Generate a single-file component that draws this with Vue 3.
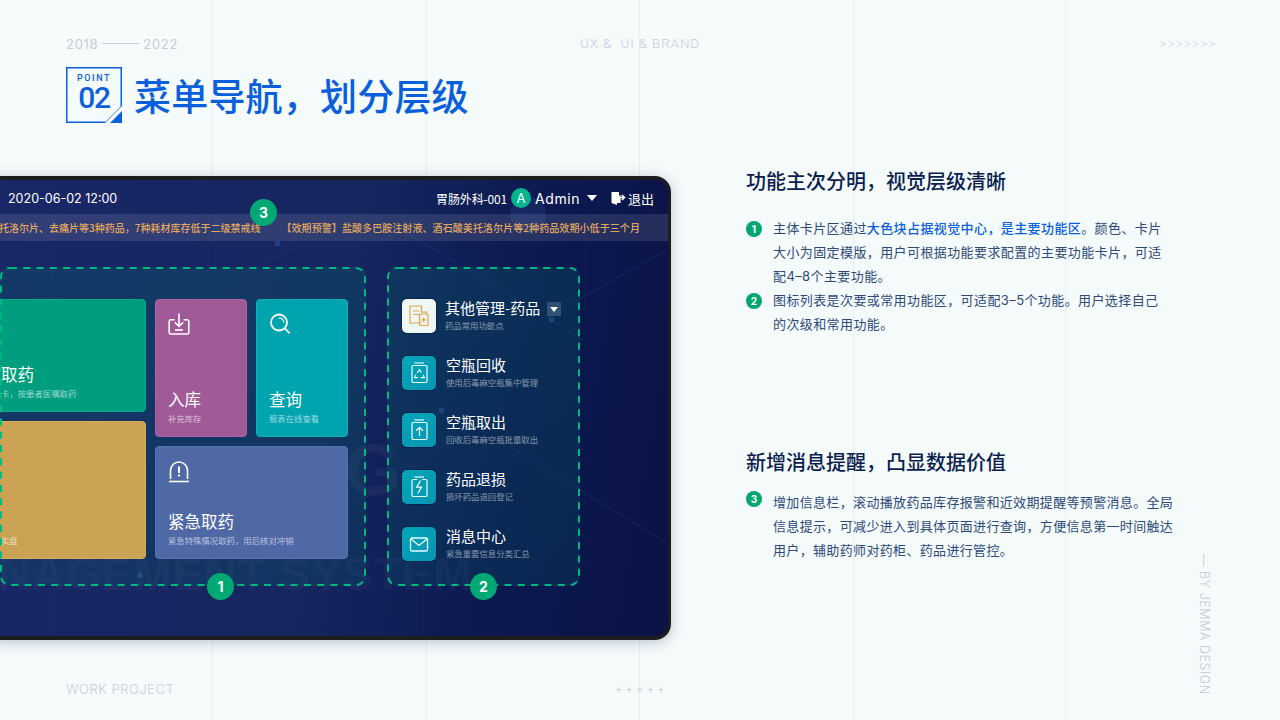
<script setup>
const sideItems = [
  { title: '空瓶回收', sub: '使用后毒麻空瓶集中管理', icon: 'recycle' },
  { title: '空瓶取出', sub: '回收后毒麻空瓶批量取出', icon: 'up' },
  { title: '药品退损', sub: '损坏药品退回登记', icon: 'bolt' },
  { title: '消息中心', sub: '紧急重要信息分类汇总', icon: 'mail' }
]
</script>

<template>
  <div class="slide">
    <div class="top-row">
      <div class="date-range"><span>2018</span><i class="dash"></i><span>2022</span></div>
      <div class="scope">UX &amp;&nbsp; UI &amp; BRAND</div>
      <div class="arrows">&gt;&gt;&gt;&gt;&gt;&gt;&gt;</div>
    </div>

    <div class="title-row">
      <div class="point">
        <svg class="point-frame" width="56" height="56" viewBox="0 0 56 56">
          <path d="M.75.75H55.25V40L40 55.25H.75Z" fill="none" stroke="#0a5fdc" stroke-width="1.5" />
          <path d="M39 56 56 39V42L42 56Z" fill="#fff" />
          <path d="M44 56 56 44V56Z" fill="#0a5fdc" />
        </svg>
        <span class="point-label">POINT</span>
        <span class="point-num">02</span>
      </div>
      <h1 class="title">菜单导航，划分层级</h1>
    </div>

    <div class="main-row">
      <div class="tablet">
        <svg class="deco" width="685" height="456" viewBox="0 0 685 456">
          <g stroke="#6f9fe0" stroke-opacity=".13" fill="none">
            <path d="M424 53 600 160" />
            <path d="M527 267 684 363" />
            <path d="M564 137 684 70" />
            <path d="M207 120 317 65" />
            <path d="M70 30V456M232 30V120M440 300V456M602 30V120" stroke-opacity=".06" />
          </g>
          <circle cx="545" cy="35" r="18" fill="#4a78b8" fill-opacity=".16" />
          <rect x="292" y="61" width="5" height="5" fill="#3258b0" fill-opacity=".55" />
          <rect x="456" y="228" width="5" height="5" fill="#3258b0" fill-opacity=".5" />
          <rect x="155" y="393" width="5" height="5" fill="#3258b0" fill-opacity=".5" />
          <rect x="566" y="137" width="5" height="5" fill="#3258b0" fill-opacity=".5" />
        </svg>
        <div class="watermark-g">G</div>
        <div class="watermark">NAGEMENT SYSTEM</div>

        <div class="topbar">
          <span class="clock">2020-06-02 12:00</span>
          <div class="user">
            <span class="dept">胃肠外科-001</span>
            <span class="avatar">A</span>
            <span class="admin">Admin</span>
            <i class="caret"></i>
            <svg class="logout-icon" width="15" height="14" viewBox="0 0 15 14">
              <path d="M.5 1H8V4.6H9.6V12H6V14L.5 12Z" fill="#fff" />
              <path d="M8.5 6.5H12.5M10.8 4 13.5 6.5 10.8 9" fill="none" stroke="#fff" stroke-width="1.6" />
            </svg>
            <span class="exit">退出</span>
          </div>
        </div>

        <div class="ticker">
          <span>托洛尔片、去痛片等3种药品，7种耗材库存低于二级禁戒线</span>
          <span class="ticker-second">【效期预警】盐酸多巴胺注射液、酒石酸美托洛尔片等2种药品效期小低于三个月</span>
          <b class="badge badge-ticker">3</b>
        </div>

        <div class="panels">
          <section class="panel panel-main">
            <svg class="dashes" width="366" height="319" viewBox="0 0 366 319">
              <rect x="1" y="1" width="364" height="317" rx="9" fill="none" stroke="#00b880" stroke-width="2" stroke-dasharray="7 6.3" />
            </svg>
            <div class="card-col card-col-wide">
              <div class="card card-green">
                <div class="card-title">取药</div>
                <div class="card-sub">卡，按患者医嘱取药</div>
              </div>
              <div class="card card-yellow">
                <div class="card-sub">实盘</div>
              </div>
            </div>
            <div class="card-col">
              <div class="card-pair">
                <div class="card card-purple">
                  <svg class="card-icon" width="22" height="22" viewBox="0 0 22 22" fill="none" stroke="#fff" stroke-width="1.6">
                    <path d="M6.5 6.8H2.8A1.6 1.6 0 0 0 1.2 8.4V19.4A1.6 1.6 0 0 0 2.8 21H19.2A1.6 1.6 0 0 0 20.8 19.4V8.4A1.6 1.6 0 0 0 19.2 6.8H15.5" />
                    <path d="M11 .5V13M6.8 9.2 11 13.4 15.2 9.2" />
                    <path d="M7 17H15" />
                  </svg>
                  <div class="card-title">入库</div>
                  <div class="card-sub">补充库存</div>
                </div>
                <div class="card card-teal">
                  <svg class="card-icon" width="22" height="22" viewBox="0 0 22 22" fill="none" stroke="#fff" stroke-width="1.8">
                    <circle cx="10" cy="9.5" r="8" />
                    <path d="M10 4.8A4.8 4.8 0 0 1 14.8 9.5" stroke-width="1.2" />
                    <path d="M15.8 15.3 20.6 20.4" />
                  </svg>
                  <div class="card-title">查询</div>
                  <div class="card-sub">报表在线查看</div>
                </div>
              </div>
              <div class="card card-blue">
                <svg class="card-icon" width="22" height="23" viewBox="0 0 22 23" fill="none" stroke="#fff" stroke-width="1.6">
                  <path d="M2.5 19V10.5A8.5 8.5 0 0 1 19.5 10.5V19" />
                  <path d="M1 21.5H21" />
                  <path d="M11 6.5V13" stroke-width="2" />
                  <path d="M11 14.5V16.5" stroke-width="2" />
                </svg>
                <div class="card-title">紧急取药</div>
                <div class="card-sub">紧急特殊情况取药，用后核对冲销</div>
              </div>
            </div>
            <b class="badge badge-one">1</b>
          </section>

          <section class="panel panel-side">
            <svg class="dashes" width="193" height="319" viewBox="0 0 193 319">
              <rect x="1" y="1" width="191" height="317" rx="9" fill="none" stroke="#00b880" stroke-width="2" stroke-dasharray="7 6.3" />
            </svg>
            <div class="side-item">
              <div class="tile tile-light">
                <svg width="34" height="34" viewBox="0 0 34 34" fill="none" stroke="#dfa44e" stroke-width="1.2">
                  <path d="M19.5 24H8V7H19.5V13" />
                  <path d="M11 12H17M11 15.5H17" />
                  <rect x="17.5" y="15" width="8.5" height="11.5" rx=".8" />
                  <path d="M18.8 13H24.7V15M21.7 18.5V23M19.5 20.8H24" />
                </svg>
              </div>
              <div class="side-text side-text-first">
                <div class="side-title">其他管理-药品</div>
                <div class="side-sub">药品常用功能点</div>
              </div>
              <span class="side-drop"><i></i></span>
            </div>
            <div v-for="item in sideItems" :key="item.title" class="side-item">
              <div class="tile">
                <svg width="34" height="34" viewBox="0 0 34 34" fill="none" stroke="#eafcff" stroke-width="1.2">
                  <template v-if="item.icon === 'recycle'">
                    <path d="M12.5 7H22" stroke-opacity=".6" stroke-width="1.8" />
                    <rect x="10" y="9.5" width="15" height="17" rx="1.2" />
                    <path d="M15.2 17 17.5 13.6 19.4 16.6M13.9 18.6 12.6 21.6H16M18.7 21.6H22.4L21 18.8" stroke-width="1.1" />
                  </template>
                  <template v-else-if="item.icon === 'up'">
                    <path d="M12.5 7H22" stroke-width="1.2" />
                    <rect x="10" y="9.5" width="15" height="17" rx="1.2" />
                    <path d="M17.5 23V14.5M14 17.8 17.5 14.3 21 17.8" stroke-width="1.3" />
                  </template>
                  <template v-else-if="item.icon === 'bolt'">
                    <path d="M12.5 7H22" />
                    <path d="M15 9.5H11.5A1.4 1.4 0 0 0 10 11V25A1.4 1.4 0 0 0 11.5 26.5H23.5A1.4 1.4 0 0 0 25 25V11A1.4 1.4 0 0 0 23.5 9.5H20" />
                    <path d="M18.5 10.5 14.8 17.2H19.5L15.8 23.5" stroke-width="1.3" />
                  </template>
                  <template v-else>
                    <rect x="8.5" y="11" width="17" height="13" rx="1.6" stroke-width="1.3" />
                    <path d="M9 12 17 18.5 25 12" stroke-width="1.3" />
                  </template>
                </svg>
              </div>
              <div class="side-text">
                <div class="side-title">{{ item.title }}</div>
                <div class="side-sub">{{ item.sub }}</div>
              </div>
            </div>
            <b class="badge badge-two">2</b>
          </section>
        </div>
      </div>

      <div class="notes">
        <h2 class="note-head">功能主次分明，视觉层级清晰</h2>
        <div class="note-list">
          <div class="note-item">
            <b class="dot">1</b>
            <p>主体卡片区通过<em>大色块占据视觉中心，是主要功能区</em>。颜色、卡片<br />大小为固定模版，用户可根据功能要求配置的主要功能卡片，可适<br />配4–8个主要功能。</p>
          </div>
          <div class="note-item">
            <b class="dot">2</b>
            <p>图标列表是次要或常用功能区，可适配3–5个功能。用户选择自己<br />的次级和常用功能。</p>
          </div>
        </div>
        <h2 class="note-head note-head-second">新增消息提醒，凸显数据价值</h2>
        <div class="note-list note-list-second">
          <div class="note-item">
            <b class="dot dot-raised">3</b>
            <p>增加信息栏，滚动播放药品库存报警和近效期提醒等预警消息。全局<br />信息提示，可减少进入到具体页面进行查询，方便信息第一时间触达<br />用户，辅助药师对药柜、药品进行管控。</p>
          </div>
        </div>
      </div>
    </div>

    <div class="foot-row">
      <span class="foot-left">WORK PROJECT</span>
      <span class="foot-plus">+ + + + +</span>
    </div>

    <div class="byline">— BY JEMMA DESIGN</div>
  </div>
</template>

<style scoped>
.slide {
  position: relative;
  width: 1280px;
  height: 720px;
  overflow: hidden;
  box-sizing: border-box;
  padding-top: 36px;
  background-color: #f5fafb;
  background-image:
    linear-gradient(#e9eff2, #e9eff2), linear-gradient(#e9eff2, #e9eff2),
    linear-gradient(#e9eff2, #e9eff2), linear-gradient(#e9eff2, #e9eff2),
    linear-gradient(#e9eff2, #e9eff2);
  background-size: 1px 100%;
  background-repeat: no-repeat;
  background-position: 212px 0, 426px 0, 639px 0, 853px 0, 1065px 0;
  font-family: Inter, "Noto Sans CJK SC", sans-serif;
}

.top-row {
  display: grid;
  grid-template-columns: 514px 579px auto;
  height: 14px;
  padding-left: 66px;
  color: #c9cdd9;
  font-size: 13px;
  line-height: 14px;
}
.date-range {
  display: flex;
  align-items: center;
  gap: 4px;
  letter-spacing: .7px;
}
.dash {
  width: 37px;
  height: 1px;
  background: #c9cdd9;
}
.scope {
  font-family: Roboto, sans-serif;
  font-size: 13.5px;
  font-weight: 300;
  letter-spacing: .85px;
}
.arrows {
  font-size: 12px;
  font-weight: 300;
  color: #d3d8e0;
  letter-spacing: .3px;
  padding-top: 1px;
}

.title-row {
  display: flex;
  align-items: center;
  gap: 12px;
  margin: 17px 0 0 66px;
}
.point {
  position: relative;
  display: flex;
  flex-direction: column;
  align-items: center;
  width: 56px;
  height: 56px;
  color: #0a5fdc;
  font-family: Roboto, sans-serif;
}
.point-frame {
  position: absolute;
  inset: 0;
}
.point-label {
  margin-top: 6px;
  font-size: 9px;
  font-weight: 500;
  line-height: 11px;
  letter-spacing: 1.6px;
}
.point-num {
  margin-top: 1px;
  font-size: 30px;
  font-weight: 500;
  line-height: 26px;
  letter-spacing: -1.2px;
}
.title {
  margin: 0;
  font-size: 37px;
  font-weight: 500;
  line-height: 56px;
  letter-spacing: .2px;
  color: #0a5fdc;
  font-family: "Noto Sans CJK SC", sans-serif;
}

.main-row {
  display: flex;
  align-items: flex-start;
  margin-top: 53px;
}
.tablet {
  position: relative;
  flex: none;
  box-sizing: border-box;
  width: 691px;
  height: 464px;
  margin-left: -20px;
  overflow: hidden;
  border: solid #1d1d20;
  border-width: 4px 3px;
  border-radius: 16px;
  box-shadow: 0 2px 14px rgba(30, 50, 90, .28);
  background: linear-gradient(100deg, #1a2768 0%, #16265f 50%, #0c1850 76%, #0a1345 100%);
  color: #fff;
  font-family: "Noto Sans CJK SC", sans-serif;
}
.deco {
  position: absolute;
  left: 0;
  top: 0;
}
.watermark {
  position: absolute;
  left: 15px;
  bottom: 37px;
  font: 700 46px/50px "Liberation Sans", sans-serif;
  letter-spacing: .6px;
  white-space: nowrap;
  color: rgba(255, 255, 255, .045);
}
.watermark-g {
  position: absolute;
  left: 362px;
  top: 250px;
  font: 700 72px/80px "Liberation Sans", sans-serif;
  color: rgba(255, 255, 255, .04);
}

.topbar {
  position: relative;
  display: flex;
  align-items: center;
  justify-content: space-between;
  height: 34px;
  padding: 2px 14px 0 25px;
  box-sizing: border-box;
}
.clock {
  font-family: Inter, sans-serif;
  font-size: 12.5px;
}
.user {
  display: flex;
  align-items: center;
}
.dept {
  font-size: 12px;
  letter-spacing: -.15px;
}
.avatar {
  display: grid;
  place-items: center;
  width: 20px;
  height: 20px;
  margin-left: 4px;
  border-radius: 50%;
  background: #00b48e;
  font: 400 13px Inter, sans-serif;
}
.admin {
  margin-left: 4px;
  font: 400 14px Inter, sans-serif;
  letter-spacing: .55px;
}
.caret {
  width: 0;
  height: 0;
  margin-left: 7px;
  border: solid transparent;
  border-width: 6px 5.5px 0;
  border-top-color: #fff;
}
.logout-icon {
  margin-left: 14px;
}
.exit {
  margin-left: 2px;
  font-size: 13px;
}

.ticker {
  position: relative;
  display: flex;
  align-items: center;
  height: 27px;
  padding-left: 16px;
  background: rgba(255, 255, 255, .11);
  color: #e3a860;
  font-size: 10px;
  font-weight: 500;
  white-space: nowrap;
}
.ticker-second {
  margin-left: 21px;
  letter-spacing: .08px;
}
.badge {
  position: absolute;
  display: grid;
  place-items: center;
  width: 27px;
  height: 27px;
  border-radius: 50%;
  background: #00a873;
  color: #fff;
  font: 700 14px/1 Inter, sans-serif;
  z-index: 3;
}
.badge-ticker {
  left: 267px;
  top: -15px;
}

.panels {
  position: relative;
  display: flex;
  gap: 21px;
  margin: 26px 0 0 17px;
}
.panel {
  position: relative;
  box-sizing: border-box;
  height: 319px;
  border-radius: 9px;
  background: linear-gradient(180deg, rgba(0, 115, 105, .24), rgba(0, 115, 105, .18));
}
.dashes {
  position: absolute;
  left: 0;
  top: 0;
  z-index: 2;
}
.panel-main {
  display: flex;
  gap: 9px;
  width: 366px;
  padding-top: 32px;
}
.panel-side {
  display: flex;
  flex-direction: column;
  gap: 23px;
  width: 193px;
  padding: 32px 0 0 15px;
}
.badge-one {
  left: 207px;
  bottom: -14px;
}
.badge-two {
  left: 83px;
  bottom: -14px;
}

.card-col {
  display: flex;
  flex-direction: column;
  gap: 9px;
  width: 193px;
  height: 260px;
}
.card-col-wide {
  width: 156px;
  margin-left: -10px;
}
.card-pair {
  display: flex;
  gap: 9px;
  height: 138px;
}
.card {
  position: relative;
  flex: 1;
  display: flex;
  flex-direction: column;
  justify-content: flex-end;
  box-sizing: border-box;
  min-width: 0;
  padding: 0 0 11px 12px;
  border: 1px solid;
  border-radius: 4px;
}
.card-icon {
  position: absolute;
  left: 12px;
  top: 13px;
}
.card-title {
  font-size: 16.5px;
  line-height: 22px;
}
.card-sub {
  font-size: 8.4px;
  line-height: 13px;
  margin-top: 2px;
  white-space: nowrap;
  color: rgba(255, 255, 255, .62);
}
.card-green {
  flex: none;
  height: 113px;
  padding-left: 10px;
  background: #009d7e;
  border-color: #0aa98b;
}
.card-yellow {
  flex: none;
  height: 138px;
  padding-left: 10px;
  background: #cba354;
  border-color: #d8ac58;
}
.card-purple {
  background: #a05a97;
  border-color: #ad64a3;
}
.card-teal {
  background: #00a4ae;
  border-color: #0eb0ba;
}
.card-blue {
  flex: none;
  height: 113px;
  background: #4f68a6;
  border-color: #5a73b0;
}

.side-item {
  display: flex;
  align-items: flex-start;
  height: 34px;
}
.tile {
  flex: none;
  width: 34px;
  height: 34px;
  border-radius: 5px;
  background: linear-gradient(135deg, #00a6b8, #0a95b0);
  box-shadow: 0 0 0 1px rgba(6, 20, 70, .5);
}
.tile svg {
  display: block;
}
.tile-light {
  background: #eef7f3;
}
.side-text {
  margin: -1px 0 0 10px;
}
.side-text-first {
  margin-left: 9px;
}
.side-title {
  font-size: 15px;
  line-height: 20px;
  white-space: nowrap;
}
.side-sub {
  margin-top: 1px;
  font-size: 8.4px;
  line-height: 12px;
  white-space: nowrap;
  color: rgba(255, 255, 255, .5);
}
.side-drop {
  display: grid;
  place-items: center;
  width: 14px;
  height: 14px;
  margin: 3px 0 0 7px;
  border-radius: 1px;
  background: rgba(255, 255, 255, .17);
}
.side-drop i {
  width: 0;
  height: 0;
  border: solid transparent;
  border-width: 5px 4px 0;
  border-top-color: #fff;
}

.notes {
  flex: none;
  margin: -9px 0 0 75px;
  font-family: Inter, "Noto Sans CJK SC", sans-serif;
}
.note-head {
  margin: 0;
  font-size: 20px;
  font-weight: 500;
  line-height: 28px;
  color: #0b1f4f;
  font-family: "Noto Sans CJK SC", sans-serif;
}
.note-head-second {
  margin-top: 112px;
}
.note-list {
  margin-top: 21px;
}
.note-list-second {
  margin-top: 14px;
}
.note-item {
  display: flex;
  gap: 11px;
}
.note-item p {
  margin: 0;
  font-size: 13px;
  line-height: 24px;
  letter-spacing: .4px;
  white-space: nowrap;
  color: #2d4a78;
}
.note-list-second .note-item p {
  letter-spacing: .34px;
}
.note-item em {
  font-style: normal;
  font-weight: 500;
  color: #0a5fdc;
}
.dot {
  flex: none;
  display: grid;
  place-items: center;
  width: 16px;
  height: 16px;
  margin-top: 5px;
  border-radius: 50%;
  background: #00a56f;
  color: #fff;
  font: 700 10px/1 Inter, sans-serif;
}
.dot-raised {
  margin-top: 1px;
}

.foot-row {
  display: grid;
  grid-template-columns: 549px auto;
  margin-top: 42px;
  padding-left: 66px;
  color: #c9cdd9;
  font-size: 13px;
  line-height: 14px;
}
.foot-left {
  letter-spacing: .55px;
  font-weight: 300;
}
.foot-plus {
  font-size: 11px;
  letter-spacing: .1px;
}

.byline {
  position: absolute;
  left: 1197px;
  top: 554px;
  writing-mode: vertical-rl;
  font-size: 12.5px;
  line-height: 14px;
  letter-spacing: .55px;
  font-weight: 300;
  white-space: nowrap;
  color: #c3c8d6;
}
</style>
